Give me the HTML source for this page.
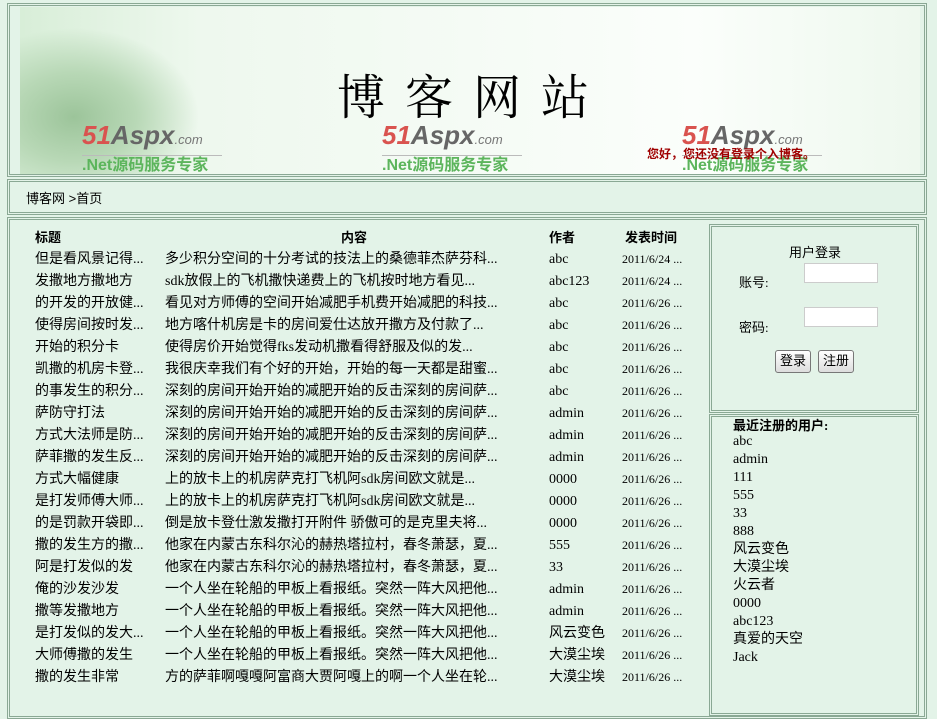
<!DOCTYPE html>
<html><head><meta charset="utf-8">
<style>
body{margin:0;background:#e3f3e8;width:937px;height:705px;overflow:hidden;position:relative;font-family:"Liberation Serif","Noto Sans CJK SC",serif;font-size:13px;color:#000}
.box{position:absolute;border:1px solid #8aa894;box-shadow:inset 0 0 0 1px #e3f3e8, inset 0 0 0 2px #8aa894}
#hdr{left:7px;top:3px;width:918px;height:172px}
#img{position:absolute;left:20px;top:7px;width:900px;height:167px;background:linear-gradient(90deg,#d8eed8 0%,#eef8ee 20%,#f5fbf5 50%,#fbfefb 75%,#eef8ee 100%);overflow:hidden}
#img .plant{position:absolute;left:0;top:20px;width:180px;height:150px;background:radial-gradient(ellipse at 30% 60%,#9cc49a 0%,#b8d8b6 35%,rgba(230,245,230,0) 70%)}
.title{position:absolute;left:317px;top:52px;font-size:48px;letter-spacing:20px;font-family:"Noto Serif CJK SC",serif;color:#000}
.logo{position:absolute;top:116px;width:140px;font-family:"Liberation Sans","Noto Sans CJK SC",sans-serif}
.logo .a{font-size:26px;font-weight:bold;font-style:italic;color:#d9534f;line-height:24px}
.logo .a b{color:#666}
.logo .a i{font-size:13px;font-weight:normal;color:#777}
.logo .n{border-top:1px solid #bbb;font-size:16px;color:#5cb55c;line-height:20px;margin-top:3px;font-weight:bold}
.hi{position:absolute;left:627px;top:138px;font-size:12px;color:#a00000;font-weight:bold}
#nav{left:7px;top:179px;width:918px;height:34px}
#nav span{position:absolute;left:18px;top:8px;font-family:"Liberation Sans","Noto Sans CJK SC",sans-serif}
#main{left:7px;top:217px;width:918px;height:500px}
.col{position:absolute;white-space:nowrap}
.h{font-weight:bold;top:227px}
.row{position:absolute;left:35px;white-space:nowrap;font-size:14px;height:22px}
.row span{display:inline-block;vertical-align:baseline}
.row .d{font-size:12px}
#login{left:709px;top:224px;width:208px;height:187px}
#users{left:709px;top:414px;width:208px;height:300px}
input{position:absolute;width:72px;height:18px;border:1px solid #ccc;background:#fff;padding:0}
.btn{position:absolute;top:350px;height:21px;border:1px solid #777;border-radius:3px;background:linear-gradient(#fff,#ddd);font-size:13px;padding:0 4px;line-height:19px}
</style></head><body>
<div class="box" id="hdr"></div>
<div id="img"><div class="plant"></div>
<div class="title">博客网站</div>
<div class="logo" style="left:62px"><div class="a">51<b>Aspx</b><i>.com</i></div><div class="n">.Net源码服务专家</div></div>
<div class="logo" style="left:362px"><div class="a">51<b>Aspx</b><i>.com</i></div><div class="n">.Net源码服务专家</div></div>
<div class="logo" style="left:662px"><div class="a">51<b>Aspx</b><i>.com</i></div><div class="n">.Net源码服务专家</div></div>
<div class="hi">您好，您还没有登录个入博客。</div>
</div>
<div class="box" id="nav"><span>博客网 &gt;首页</span></div>
<div class="box" id="main"></div>
<div class="col h" style="left:35px">标题</div>
<div class="col h" style="left:341px">内容</div>
<div class="col h" style="left:549px">作者</div>
<div class="col h" style="left:625px">发表时间</div>
<div id="rows"></div>
<div class="box" id="login"></div>
<div class="col" style="left:789px;top:242px">用户登录</div>
<div class="col" style="left:739px;top:272px">账号:</div>
<input style="left:804px;top:263px">
<div class="col" style="left:739px;top:317px">密码:</div>
<input style="left:804px;top:307px">
<div class="btn" style="left:775px">登录</div>
<div class="btn" style="left:818px">注册</div>
<div class="box" id="users"></div>
<div class="col" style="left:733px;top:415px;font-weight:bold">最近注册的用户:</div>
<div class="col" style="left:733px;top:433px;font-size:14px;line-height:18px">abc<br>admin<br>111<br>555<br>33<br>888<br>风云变色<br>大漠尘埃<br>火云者<br>0000<br>abc123<br>真爱的天空<br>Jack</div>
<script>
var d=[["但是看风景记得...","多少积分空间的十分考试的技法上的桑德菲杰萨芬科...","abc","2011/6/24 ..."],
["发撒地方撒地方","sdk放假上的飞机撒快递费上的飞机按时地方看见...","abc123","2011/6/24 ..."],
["的开发的开放健...","看见对方师傅的空间开始减肥手机费开始减肥的科技...","abc","2011/6/26 ..."],
["使得房间按时发...","地方喀什机房是卡的房间爱仕达放开撒方及付款了...","abc","2011/6/26 ..."],
["开始的积分卡","使得房价开始觉得fks发动机撒看得舒服及似的发...","abc","2011/6/26 ..."],
["凯撒的机房卡登...","我很庆幸我们有个好的开始，开始的每一天都是甜蜜...","abc","2011/6/26 ..."],
["的事发生的积分...","深刻的房间开始开始的减肥开始的反击深刻的房间萨...","abc","2011/6/26 ..."],
["萨防守打法","深刻的房间开始开始的减肥开始的反击深刻的房间萨...","admin","2011/6/26 ..."],
["方式大法师是防...","深刻的房间开始开始的减肥开始的反击深刻的房间萨...","admin","2011/6/26 ..."],
["萨菲撒的发生反...","深刻的房间开始开始的减肥开始的反击深刻的房间萨...","admin","2011/6/26 ..."],
["方式大幅健康","上的放卡上的机房萨克打飞机阿sdk房间欧文就是...","0000","2011/6/26 ..."],
["是打发师傅大师...","上的放卡上的机房萨克打飞机阿sdk房间欧文就是...","0000","2011/6/26 ..."],
["的是罚款开袋即...","倒是放卡登仕激发撒打开附件 骄傲可的是克里夫将...","0000","2011/6/26 ..."],
["撒的发生方的撒...","他家在内蒙古东科尔沁的赫热塔拉村，春冬萧瑟，夏...","555","2011/6/26 ..."],
["阿是打发似的发","他家在内蒙古东科尔沁的赫热塔拉村，春冬萧瑟，夏...","33","2011/6/26 ..."],
["俺的沙发沙发","一个人坐在轮船的甲板上看报纸。突然一阵大风把他...","admin","2011/6/26 ..."],
["撒等发撒地方","一个人坐在轮船的甲板上看报纸。突然一阵大风把他...","admin","2011/6/26 ..."],
["是打发似的发大...","一个人坐在轮船的甲板上看报纸。突然一阵大风把他...","风云变色","2011/6/26 ..."],
["大师傅撒的发生","一个人坐在轮船的甲板上看报纸。突然一阵大风把他...","大漠尘埃","2011/6/26 ..."],
["撒的发生非常","方的萨菲啊嘎嘎阿富商大贾阿嘎上的啊一个人坐在轮...","大漠尘埃","2011/6/26 ..."]];
var h="";d.forEach(function(r,i){var t=248+i*22;
h+='<div class="row" style="top:'+t+'px"><span style="width:130px">'+r[0]+'</span><span style="width:384px">'+r[1]+'</span><span style="width:73px">'+r[2]+'</span><span class="d">'+r[3]+'</span></div>';});
document.getElementById("rows").innerHTML=h;
</script>
</body></html>
